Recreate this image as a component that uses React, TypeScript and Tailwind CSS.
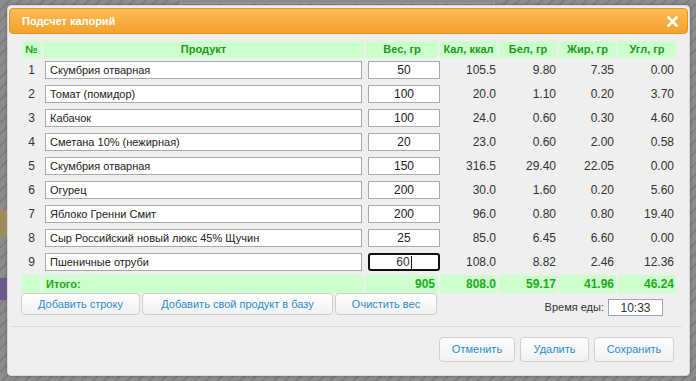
import React from "react";

const rows = [
  { n: 1, name: "Скумбрия отварная", w: "50", k: "105.5", b: "9.80", j: "7.35", u: "0.00" },
  { n: 2, name: "Томат (помидор)", w: "100", k: "20.0", b: "1.10", j: "0.20", u: "3.70" },
  { n: 3, name: "Кабачок", w: "100", k: "24.0", b: "0.60", j: "0.30", u: "4.60" },
  { n: 4, name: "Сметана 10% (нежирная)", w: "20", k: "23.0", b: "0.60", j: "2.00", u: "0.58" },
  { n: 5, name: "Скумбрия отварная", w: "150", k: "316.5", b: "29.40", j: "22.05", u: "0.00" },
  { n: 6, name: "Огурец", w: "200", k: "30.0", b: "1.60", j: "0.20", u: "5.60" },
  { n: 7, name: "Яблоко Гренни Смит", w: "200", k: "96.0", b: "0.80", j: "0.80", u: "19.40" },
  { n: 8, name: "Сыр Российский новый люкс 45% Щучин", w: "25", k: "85.0", b: "6.45", j: "6.60", u: "0.00" },
  { n: 9, name: "Пшеничные отруби", w: "60", k: "108.0", b: "8.82", j: "2.46", u: "12.36" },
];

const font = { fontFamily: "'Liberation Sans', Arial, sans-serif" };

function Btn({ children, className = "" }: { children: React.ReactNode; className?: string }) {
  return (
    <div
      className={
        "flex items-center justify-center rounded-[4px] border border-[#cfcfcf] bg-gradient-to-b from-[#ffffff] to-[#f1f1f1] text-[11px] text-[#2a8dcc] " +
        className
      }
    >
      {children}
    </div>
  );
}

export default function App() {
  const cols = "grid grid-cols-[19px_321px_72px_57px_58px_57px_58px] gap-x-[2px]";
  return (
    <div
      className="relative h-[381px] w-[696px] overflow-hidden bg-[repeating-linear-gradient(135deg,#8c8c8c_0px,#8c8c8c_6px,#7e7e7e_6px,#7e7e7e_8px)] pl-[7px] pt-[5px]"
      style={font}
    >
      <div className="absolute left-0 top-[210px] h-[27px] w-[7px] bg-[#a08a60]" />
      <div className="absolute left-0 top-[278px] h-[22px] w-[7px] bg-[#6a5a8a]" />
      <div className="absolute left-[180px] top-0 h-[4px] w-[315px] border-x border-b border-[#9a9a9a] bg-[#8a8a8a]" />
      <div className="h-[371px] w-[683px] rounded-[4px] border border-[#d8d8d8] bg-[#efefef] px-[1px] pt-[2px] shadow-[0_0_3px_rgba(0,0,0,0.35)]">
        <div className="flex h-[26px] items-center justify-between rounded-[4px] border border-[#e6921e] bg-gradient-to-b from-[#fbbc55] to-[#f5a12a] pl-[12px] pr-[9px]">
          <span className="text-[11px] font-bold text-white">Подсчет калорий</span>
          <svg width="11" height="11" viewBox="0 0 11 11">
            <path d="M1.5 1.5 L9.5 9.5 M9.5 1.5 L1.5 9.5" stroke="white" strokeWidth="2.6" strokeLinecap="square" />
          </svg>
        </div>

        <div className="pl-[12px] pt-[7px]">
          <div className="ml-[1px] flex flex-col gap-y-[2px]">
            <div className={cols + " h-[16px] text-[11px] font-bold text-[#1d9a1d]"}>
              <div className="flex items-center justify-center bg-[#ccffcc]">№</div>
              <div className="flex items-center justify-center bg-[#ccffcc]">Продукт</div>
              <div className="flex items-center justify-center bg-[#ccffcc]">Вес, гр</div>
              <div className="flex items-center justify-center bg-[#ccffcc]">Кал, ккал</div>
              <div className="flex items-center justify-center bg-[#ccffcc]">Бел, гр</div>
              <div className="flex items-center justify-center bg-[#ccffcc]">Жир, гр</div>
              <div className="flex items-center justify-center bg-[#ccffcc]">Угл, гр</div>
            </div>
            {rows.map((r) => (
              <div key={r.n} className={cols + " h-[22px] items-center text-[12px] text-[#333333]"}>
                <div className="text-center">{r.n}</div>
                <div className="ml-[2px] flex h-[18px] w-[317px] items-center border border-[#a9a9a9] bg-white pl-[4px] text-[11px] text-[#222]">
                  {r.name}
                </div>
                {r.n === 9 ? (
                  <div className="ml-[2px] flex h-[18px] w-[72px] items-center justify-center rounded-[3px] border-2 border-[#111] bg-white">
                    <span>60</span>
                    <span className="ml-[1px] inline-block h-[13px] w-[1px] bg-[#111]" />
                  </div>
                ) : (
                  <div className="ml-[2px] flex h-[18px] w-[72px] items-center justify-center border border-[#a9a9a9] bg-white text-[#222]">
                    {r.w}
                  </div>
                )}
                <div className="pr-[1px] text-right">{r.k}</div>
                <div className="pr-[1px] text-right">{r.b}</div>
                <div className="pr-[2px] text-right">{r.j}</div>
                <div className="pr-[2px] text-right">{r.u}</div>
              </div>
            ))}
            <div className={cols + " h-[16px] text-[12px] font-bold text-[#1faa1f]"}>
              <div className="bg-[#ccffcc]" />
              <div className="flex items-center bg-[#ccffcc] pl-[3px] text-[11px]">Итого:</div>
              <div className="flex items-center justify-end bg-[#ccffcc] pr-[3px]">905</div>
              <div className="flex items-center justify-end bg-[#ccffcc] pr-[1px]">808.0</div>
              <div className="flex items-center justify-end bg-[#ccffcc] pr-[1px]">59.17</div>
              <div className="flex items-center justify-end bg-[#ccffcc] pr-[2px]">41.96</div>
              <div className="flex items-center justify-end bg-[#ccffcc] pr-[2px]">46.24</div>
            </div>
          </div>

          <div className="mt-[2px] flex h-[22px] w-[655px] items-center">
            <Btn className="h-[22px] w-[119px]">Добавить строку</Btn>
            <Btn className="ml-[2px] h-[22px] w-[191px]">Добавить свой продукт в базу</Btn>
            <Btn className="ml-[2px] h-[22px] w-[102px]">Очистить вес</Btn>
            <div className="ml-auto mr-[13px] mt-[7px] flex items-center text-[11px] text-[#333]">
              <span>Время еды:</span>
              <div className="ml-[4px] flex h-[17px] w-[55px] items-center justify-center border border-[#a89cc4] bg-white text-[12px]">
                10:33
              </div>
            </div>
          </div>
        </div>

        <div className="mx-[1px] mt-[11px] h-[1px] w-[672px] bg-[#dcdcdc]" />

        <div className="flex justify-end gap-x-[5px] pr-[14px] pt-[10px]">
          <Btn className="h-[25px] w-[76px]">Отменить</Btn>
          <Btn className="h-[25px] w-[69px]">Удалить</Btn>
          <Btn className="h-[25px] w-[80px]">Сохранить</Btn>
        </div>
      </div>
    </div>
  );
}
